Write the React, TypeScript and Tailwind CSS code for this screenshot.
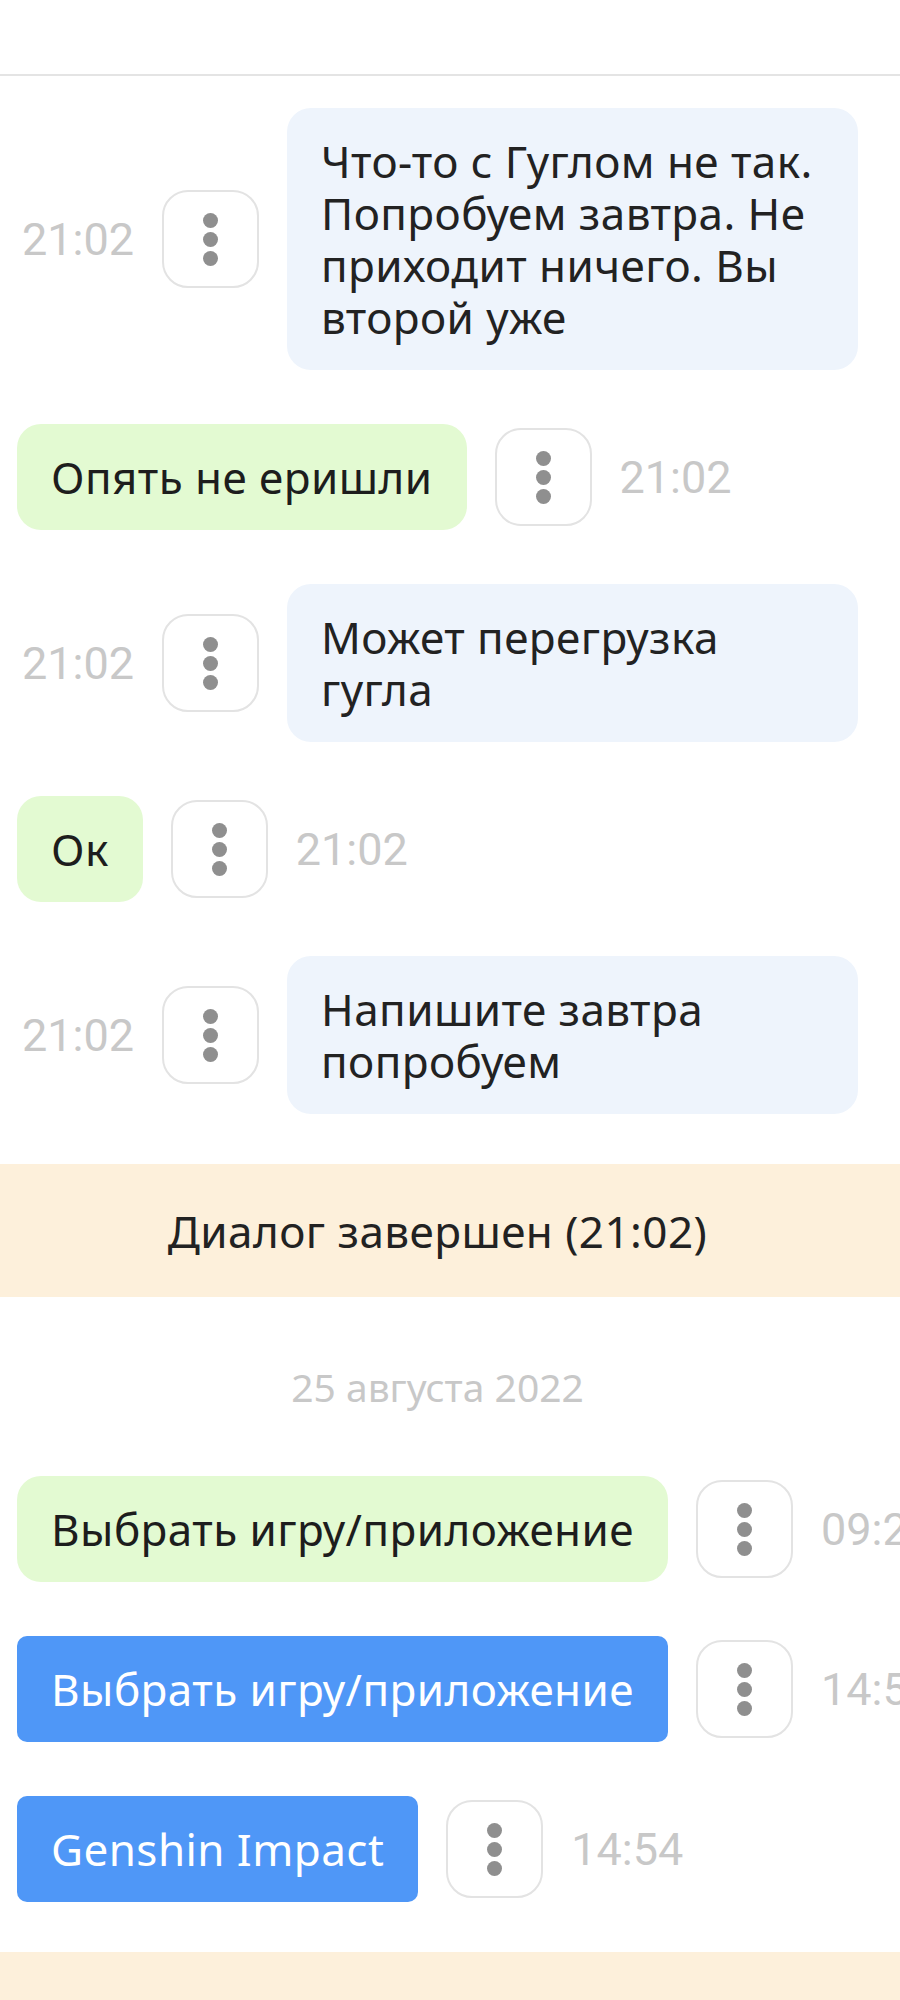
import { ReactNode } from "react";

type Kind = "in" | "out" | "action";

interface Msg {
    kind: Kind;
    text: ReactNode;
    time: string;
}

/* Three-dot menu button next to each message */
function DotsButton() {
    return (
        <button className="w-[97px] h-[98px] shrink-0 rounded-[26px] border-2 border-[#e3e3e3] bg-white flex flex-col items-center justify-center gap-[4px]">
            <span className="w-[15px] h-[15px] rounded-full bg-[#8f8f8f]" />
            <span className="w-[15px] h-[15px] rounded-full bg-[#8f8f8f]" />
            <span className="w-[15px] h-[15px] rounded-full bg-[#8f8f8f]" />
        </button>
    );
}

function Time({ value }: { value: string }) {
    return (
        <span className="shrink-0 text-[45px] leading-none text-[#c8c8c8] font-['Roboto',sans-serif] whitespace-nowrap">
            {value}
        </span>
    );
}

function MessageRow({ msg }: { msg: Msg }) {
    if (msg.kind === "in") {
        return (
            <div className="flex items-center justify-end gap-[28px] pr-[42px]">
                <Time value={msg.time} />
                <DotsButton />
                <div className="w-[571px] shrink-0 rounded-[24px] bg-[#eef4fc] px-[34px] py-[27px] text-[44px] leading-[52px] tracking-[0.01em] text-[#222]">
                    {msg.text}
                </div>
            </div>
        );
    }

    const bubble =
        msg.kind === "out"
            ? "rounded-[24px] bg-[#e3fad2] text-[#1d1d1d]"
            : "rounded-[10px] bg-[#4f97f7] text-white";

    return (
        <div className="flex items-center gap-[28px] pl-[17px] whitespace-nowrap">
            <div className={`shrink-0 px-[34px] py-[27px] text-[44px] leading-[52px] tracking-[0.01em] ${bubble}`}>
                {msg.text}
            </div>
            <DotsButton />
            <Time value={msg.time} />
        </div>
    );
}

function Banner({ text }: { text: string }) {
    return (
        <div className="w-full h-[133px] bg-[#fdf0db] flex items-center justify-center pr-[25px] text-[44px] tracking-[0.01em] text-[#222]">
            {text}
        </div>
    );
}

const firstDay: Msg[] = [
    {
        kind: "in",
        text: (
            <>
                Что-то с Гуглом не так.
                <br />
                Попробуем завтра. Не
                <br />
                приходит ничего. Вы
                <br />
                второй уже
            </>
        ),
        time: "21:02",
    },
    { kind: "out", text: "Опять не еришли", time: "21:02" },
    {
        kind: "in",
        text: (
            <>
                Может перегрузка
                <br />
                гугла
            </>
        ),
        time: "21:02",
    },
    { kind: "out", text: "Ок", time: "21:02" },
    {
        kind: "in",
        text: (
            <>
                Напишите завтра
                <br />
                попробуем
            </>
        ),
        time: "21:02",
    },
];

const secondDay: Msg[] = [
    { kind: "out", text: "Выбрать игру/приложение", time: "09:24" },
    { kind: "action", text: "Выбрать игру/приложение", time: "14:54" },
    { kind: "action", text: "Genshin Impact", time: "14:54" },
];

export default function App() {
    return (
        <div className="w-[900px] h-[2000px] overflow-hidden bg-white font-['Noto_Sans',sans-serif]">
            {/* Header strip */}
            <div className="h-[76px] border-b-2 border-[#e4e4e4]" />

            {/* Messages */}
            <div className="flex flex-col gap-[54px] pt-[32px]">
                {firstDay.map((m, i) => (
                    <MessageRow key={`a-${i}`} msg={m} />
                ))}
            </div>

            <div className="mt-[50px]">
                <Banner text="Диалог завершен (21:02)" />
            </div>

            {/* Date separator */}
            <div className="mt-[64px] h-[52px] flex items-center justify-center pr-[25px] text-[39px] text-[#c8c8c8]">
                25 августа 2022
            </div>

            <div className="flex flex-col gap-[54px] mt-[63px]">
                {secondDay.map((m, i) => (
                    <MessageRow key={`b-${i}`} msg={m} />
                ))}
            </div>

            <div className="mt-[50px]">
                <div className="w-full h-[133px] bg-[#fdf0db] flex justify-center pr-[25px] pt-[44px] text-[44px] tracking-[0.01em] text-[#222] leading-[52px]">
                    Диалог завершен (14:55)
                </div>
            </div>
        </div>
    );
}
